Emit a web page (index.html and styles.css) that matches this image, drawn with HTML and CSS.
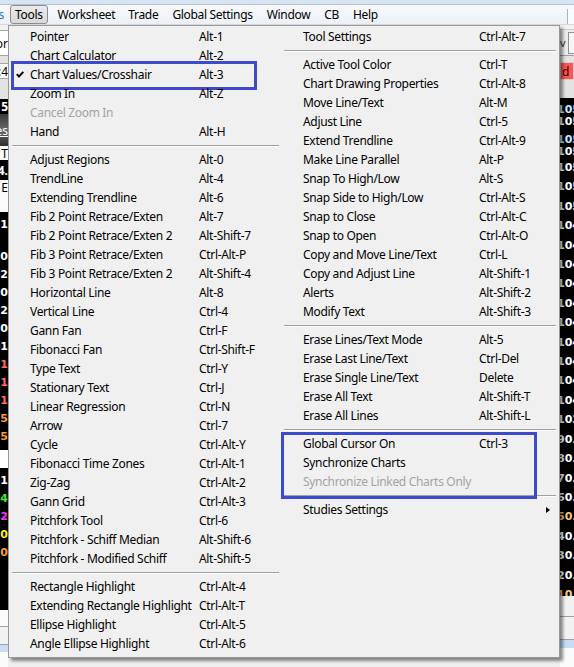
FILE: index.html
```html
<!DOCTYPE html>
<html lang="en">
<head>
<meta charset="utf-8">
<title>Tools menu</title>
<link rel="stylesheet" href="styles.css">
</head>
<body>
<div class="screen">
  <header class="menubar">
    <div class="menubar-top"></div>
    <nav class="menubar-items">
      <span class="mb-cut">s</span>
      <span class="mb-item mb-active">Tools</span>
      <span class="mb-item">Worksheet</span>
      <span class="mb-item">Trade</span>
      <span class="mb-item">Global Settings</span>
      <span class="mb-item">Window</span>
      <span class="mb-item">CB</span>
      <span class="mb-item">Help</span>
      <span class="mb-field"></span>
    </nav>
  </header>

  <div class="workspace">
    <div class="left-strip">
      <div class="ls ls-light h5"></div>
      <div class="ls ls-field h26"><span>Indicator</span></div>
      <div class="ls ls-gray h7"></div>
      <div class="ls ls-field h16"><span>1:4</span></div>
      <div class="ls ls-gray h20"></div>
      <div class="ls ls-black h15 bold"><span>5</span></div>
      <div class="ls ls-dark h32"><span class="ul">Studies</span></div>
      <div class="ls ls-white h14"><span>- T</span></div>
      <div class="ls ls-black h20 bold"><span>4.</span></div>
      <div class="ls ls-white h15"><span>E</span></div>
      <div class="ls ls-white h17"></div>
      <div class="ls ls-black h398 numbers">
        <span class="c-white">#1</span>
        <span class="c-white gap">3.0</span>
        <span class="c-white">.2</span>
        <span class="c-white">1.0</span>
        <span class="c-white">.2</span>
        <span class="c-white">20</span>
        <span class="c-white">01</span>
        <span class="c-red">3.1</span>
        <span class="c-red">3.1</span>
        <span class="c-red">3.1</span>
        <span class="c-orange">25</span>
        <span class="c-orange">75</span>
        <span class="blank"></span>
        <span class="c-white">, 1</span>
        <span class="c-green">4</span>
        <span class="c-magenta">2</span>
        <span class="c-yellow">0</span>
        <span class="c-orange">0</span>
      </div>
      <div class="ls ls-white h17 line"></div>
      <div class="ls ls-light h18 line"></div>
      <div class="ls ls-blue h7"></div>
      <div class="ls ls-white fill"></div>
    </div>

    <div class="center"></div>

    <div class="right-strip">
      <div class="rs rs-light h4"></div>
      <div class="rs rs-toolbar h27"><span class="tb-char">v</span><span class="tb-btn"></span></div>
      <div class="rs rs-gray h6"></div>
      <div class="rs rs-red h18"><span>d</span></div>
      <div class="rs rs-gray h18"></div>
      <div class="rs rs-black h498 prices">
        <span class="p-blue short">105</span>
        <span class="p-white short">105</span>
        <span class="p-blue short spaced">105</span>
        <span class="p-white short">105</span>
        <span class="p-white">105</span>
        <span class="p-white">105</span>
        <span class="p-white">105</span>
        <span class="p-white">104</span>
        <span class="p-white">104</span>
        <span class="p-white">104</span>
        <span class="p-white">104</span>
        <span class="p-white">104</span>
        <span class="p-white">104</span>
        <span class="p-white">104</span>
        <span class="p-white">104</span>
        <span class="p-white">104</span>
        <span class="p-white">104</span>
        <span class="p-white">103</span>
        <span class="p-white">90.</span>
        <span class="p-white">80.</span>
        <span class="p-white">70.</span>
        <span class="p-white">60.</span>
        <span class="p-orange">50.</span>
        <span class="p-white">40.</span>
        <span class="p-white">30.</span>
        <span class="p-white">20.</span>
        <span class="p-orange">10.</span>
      </div>
      <div class="rs rs-light h21 line"></div>
      <div class="rs rs-light h23 line"></div>
      <div class="rs rs-blue h8"></div>
      <div class="rs rs-white fill"></div>
    </div>
  </div>

  <div class="dropdown">
    <div class="col col-left">
      <div class="item"><span class="chk"></span><span class="lbl">Pointer</span><span class="key">Alt-1</span></div>
      <div class="item"><span class="chk"></span><span class="lbl">Chart Calculator</span><span class="key">Alt-2</span></div>
      <div class="item marked"><span class="chk"><svg width="8" height="7" viewBox="0 0 8 7"><path d="M0.8 3.2 L3 5.5 L7.3 0.8" fill="none" stroke="#000" stroke-width="1.9"/></svg></span><span class="lbl">Chart Values/Crosshair</span><span class="key">Alt-3</span></div>
      <div class="item"><span class="chk"></span><span class="lbl">Zoom In</span><span class="key">Alt-Z</span></div>
      <div class="item disabled"><span class="chk"></span><span class="lbl">Cancel Zoom In</span><span class="key"></span></div>
      <div class="item"><span class="chk"></span><span class="lbl">Hand</span><span class="key">Alt-H</span></div>
      <div class="sep"></div>
      <div class="item"><span class="chk"></span><span class="lbl">Adjust Regions</span><span class="key">Alt-0</span></div>
      <div class="item"><span class="chk"></span><span class="lbl">TrendLine</span><span class="key">Alt-4</span></div>
      <div class="item"><span class="chk"></span><span class="lbl">Extending Trendline</span><span class="key">Alt-6</span></div>
      <div class="item"><span class="chk"></span><span class="lbl">Fib 2 Point Retrace/Exten</span><span class="key">Alt-7</span></div>
      <div class="item"><span class="chk"></span><span class="lbl">Fib 2 Point Retrace/Exten 2</span><span class="key">Alt-Shift-7</span></div>
      <div class="item"><span class="chk"></span><span class="lbl">Fib 3 Point Retrace/Exten</span><span class="key">Ctrl-Alt-P</span></div>
      <div class="item"><span class="chk"></span><span class="lbl">Fib 3 Point Retrace/Exten 2</span><span class="key">Alt-Shift-4</span></div>
      <div class="item"><span class="chk"></span><span class="lbl">Horizontal Line</span><span class="key">Alt-8</span></div>
      <div class="item"><span class="chk"></span><span class="lbl">Vertical Line</span><span class="key">Ctrl-4</span></div>
      <div class="item"><span class="chk"></span><span class="lbl">Gann Fan</span><span class="key">Ctrl-F</span></div>
      <div class="item"><span class="chk"></span><span class="lbl">Fibonacci Fan</span><span class="key">Ctrl-Shift-F</span></div>
      <div class="item"><span class="chk"></span><span class="lbl">Type Text</span><span class="key">Ctrl-Y</span></div>
      <div class="item"><span class="chk"></span><span class="lbl">Stationary Text</span><span class="key">Ctrl-J</span></div>
      <div class="item"><span class="chk"></span><span class="lbl">Linear Regression</span><span class="key">Ctrl-N</span></div>
      <div class="item"><span class="chk"></span><span class="lbl">Arrow</span><span class="key">Ctrl-7</span></div>
      <div class="item"><span class="chk"></span><span class="lbl">Cycle</span><span class="key">Ctrl-Alt-Y</span></div>
      <div class="item"><span class="chk"></span><span class="lbl">Fibonacci Time Zones</span><span class="key">Ctrl-Alt-1</span></div>
      <div class="item"><span class="chk"></span><span class="lbl">Zig-Zag</span><span class="key">Ctrl-Alt-2</span></div>
      <div class="item"><span class="chk"></span><span class="lbl">Gann Grid</span><span class="key">Ctrl-Alt-3</span></div>
      <div class="item"><span class="chk"></span><span class="lbl">Pitchfork Tool</span><span class="key">Ctrl-6</span></div>
      <div class="item"><span class="chk"></span><span class="lbl">Pitchfork - Schiff Median</span><span class="key">Alt-Shift-6</span></div>
      <div class="item"><span class="chk"></span><span class="lbl">Pitchfork - Modified Schiff</span><span class="key">Alt-Shift-5</span></div>
      <div class="sep"></div>
      <div class="item"><span class="chk"></span><span class="lbl">Rectangle Highlight</span><span class="key">Ctrl-Alt-4</span></div>
      <div class="item"><span class="chk"></span><span class="lbl">Extending Rectangle Highlight</span><span class="key">Ctrl-Alt-T</span></div>
      <div class="item"><span class="chk"></span><span class="lbl">Ellipse Highlight</span><span class="key">Ctrl-Alt-5</span></div>
      <div class="item"><span class="chk"></span><span class="lbl">Angle Ellipse Highlight</span><span class="key">Ctrl-Alt-6</span></div>
    </div>
    <div class="col col-right">
      <div class="item"><span class="chk"></span><span class="lbl">Tool Settings</span><span class="key">Ctrl-Alt-7</span></div>
      <div class="sep"></div>
      <div class="item"><span class="chk"></span><span class="lbl">Active Tool Color</span><span class="key">Ctrl-T</span></div>
      <div class="item"><span class="chk"></span><span class="lbl">Chart Drawing Properties</span><span class="key">Ctrl-Alt-8</span></div>
      <div class="item"><span class="chk"></span><span class="lbl">Move Line/Text</span><span class="key">Alt-M</span></div>
      <div class="item"><span class="chk"></span><span class="lbl">Adjust Line</span><span class="key">Ctrl-5</span></div>
      <div class="item"><span class="chk"></span><span class="lbl">Extend Trendline</span><span class="key">Ctrl-Alt-9</span></div>
      <div class="item"><span class="chk"></span><span class="lbl">Make Line Parallel</span><span class="key">Alt-P</span></div>
      <div class="item"><span class="chk"></span><span class="lbl">Snap To High/Low</span><span class="key">Alt-S</span></div>
      <div class="item"><span class="chk"></span><span class="lbl">Snap Side to High/Low</span><span class="key">Ctrl-Alt-S</span></div>
      <div class="item"><span class="chk"></span><span class="lbl">Snap to Close</span><span class="key">Ctrl-Alt-C</span></div>
      <div class="item"><span class="chk"></span><span class="lbl">Snap to Open</span><span class="key">Ctrl-Alt-O</span></div>
      <div class="item"><span class="chk"></span><span class="lbl">Copy and Move Line/Text</span><span class="key">Ctrl-L</span></div>
      <div class="item"><span class="chk"></span><span class="lbl">Copy and Adjust Line</span><span class="key">Alt-Shift-1</span></div>
      <div class="item"><span class="chk"></span><span class="lbl">Alerts</span><span class="key">Alt-Shift-2</span></div>
      <div class="item"><span class="chk"></span><span class="lbl">Modify Text</span><span class="key">Alt-Shift-3</span></div>
      <div class="sep"></div>
      <div class="item"><span class="chk"></span><span class="lbl">Erase Lines/Text Mode</span><span class="key">Alt-5</span></div>
      <div class="item"><span class="chk"></span><span class="lbl">Erase Last Line/Text</span><span class="key">Ctrl-Del</span></div>
      <div class="item"><span class="chk"></span><span class="lbl">Erase Single Line/Text</span><span class="key">Delete</span></div>
      <div class="item"><span class="chk"></span><span class="lbl">Erase All Text</span><span class="key">Alt-Shift-T</span></div>
      <div class="item"><span class="chk"></span><span class="lbl">Erase All Lines</span><span class="key">Alt-Shift-L</span></div>
      <div class="sep"></div>
      <div class="group-marked">
        <div class="item"><span class="chk"></span><span class="lbl">Global Cursor On</span><span class="key">Ctrl-3</span></div>
        <div class="item"><span class="chk"></span><span class="lbl">Synchronize Charts</span><span class="key"></span></div>
        <div class="item disabled"><span class="chk"></span><span class="lbl">Synchronize Linked Charts Only</span><span class="key"></span></div>
      </div>
      <div class="sep"></div>
      <div class="item"><span class="chk"></span><span class="lbl">Studies Settings</span><span class="key"><span class="sub-arrow"></span></span></div>
    </div>
  </div>
</div>
</body>
</html>
```

FILE: styles.css
```css
* { box-sizing: border-box; }

html, body {
  margin: 0;
  padding: 0;
}

body {
  width: 574px;
  height: 667px;
  overflow: hidden;
  background: #f0f0f0;
  font-family: "Noto Sans", "Open Sans", sans-serif;
  font-size: 12px;
  letter-spacing: -0.32px;
  color: #000;
}

.screen {
  position: relative;
  width: 574px;
  height: 667px;
  display: flex;
  flex-direction: column;
}

/* ---------- menu bar ---------- */
.menubar {
  height: 25px;
  flex: none;
  display: flex;
  flex-direction: column;
}

.menubar-top {
  height: 6px;
  background: #d7e4f3;
  border-bottom: 1px solid #b8c2cf;
}

.menubar-items {
  flex: 1;
  display: flex;
  align-items: center;
  background: linear-gradient(#f7f9fc, #edf1f6);
  border-bottom: 1px solid #d4d9e0;
  white-space: nowrap;
}

.mb-cut {
  width: 4px;
  overflow: hidden;
  color: #2b6fd6;
  direction: rtl;
  margin-right: 6px;
}

.mb-item {
  padding: 0 7px;
  line-height: 17px;
}

.mb-active {
  border: 1px solid #8a8c8f;
  border-radius: 3px;
  background: linear-gradient(#ebebeb, #d9d9d9);
  padding: 0 4px;
  margin-right: 3px;
}

.mb-item:nth-child(4) { margin-left: -1px; }

.mb-field {
  margin-left: auto;
  width: 7px;
  height: 15px;
  border-left: 1px solid #a9b3bf;
  background: #fafbfc;
  align-self: flex-end;
}

/* ---------- background app ---------- */
.workspace {
  flex: 1;
  display: flex;
  min-height: 0;
}

.left-strip {
  width: 8px;
  display: flex;
  flex-direction: column;
  overflow: hidden;
}

.center {
  flex: 1;
  background: #f0f0f0;
}

.right-strip {
  width: 14px;
  display: flex;
  flex-direction: column;
  overflow: hidden;
}

.ls, .rs {
  flex: none;
  display: flex;
  align-items: center;
  white-space: nowrap;
  font-size: 12px;
  letter-spacing: 0;
}

.ls { justify-content: flex-end; }
.rs { justify-content: flex-start; }

.h4 { height: 4px; }
.h5 { height: 5px; }
.h6 { height: 6px; }
.h7 { height: 7px; }
.h8 { height: 8px; }
.h14 { height: 14px; }
.h15 { height: 15px; }
.h16 { height: 16px; }
.h17 { height: 17px; }
.h18 { height: 18px; }
.h20 { height: 20px; }
.h21 { height: 21px; }
.h23 { height: 23px; }
.h26 { height: 26px; }
.h27 { height: 27px; }
.h32 { height: 32px; }
.h398 { height: 398px; }
.h498 { height: 498px; }
.fill { flex: 1; }

.ls-light, .rs-light { background: #f2f2f2; }
.ls-field { background: #fff; border-top: 1px solid #a5a5a5; border-bottom: 1px solid #a5a5a5; }
.ls-gray, .rs-gray { background: #e3e3e3; }
.ls-black, .rs-black { background: #000; color: #fff; }
.ls-dark { background: linear-gradient(#3a3a3a, #6a6a6a 50%, #2e2e2e); color: #fff; }
.ls-white, .rs-white { background: #fafafa; }
.ls-blue, .rs-blue { background: #c8ddf4; }
.line { border-bottom: 1px solid #9f9f9f; }
.bold { font-weight: 700; }
.ul { text-decoration: underline; }

.numbers {
  flex-direction: column;
  align-items: flex-end;
  justify-content: flex-start;
  font-family: "DejaVu Sans", sans-serif;
  font-weight: 700;
  font-size: 11px;
  line-height: 18px;
  padding-top: 4px;
}
.numbers .gap { margin-top: 14px; }
.numbers .blank { height: 18px; background: #fff; width: 8px; margin: 4px 0; }
.c-white { color: #fff; }
.c-red { color: #ff6a6a; }
.c-orange { color: #ff9a2e; }
.c-green { color: #33ee33; }
.c-magenta { color: #ff33ff; }
.c-yellow { color: #ffee22; }

.rs-toolbar {
  background: #ececec;
  border-top: 1px solid #c9c9c9;
  border-bottom: 1px solid #9d9d9d;
  gap: 2px;
}
.tb-char { color: #333; margin-left: 0; font-size: 11px; }
.tb-btn {
  width: 6px;
  height: 22px;
  border: 1px solid #8f8f8f;
  border-right: none;
  background: #f6f6f6;
}

.rs-red {
  background: #ff5252;
  border: 1px solid #d0d0d0;
  padding-left: 1px;
  color: #300;
}

.prices {
  flex-direction: column;
  align-items: flex-start;
  justify-content: flex-start;
  font-family: "DejaVu Sans", sans-serif;
  font-weight: 700;
  font-size: 11px;
  line-height: 19.4px;
  padding-top: 6px;
  margin-left: -3px;
  overflow: visible;
}
.prices .short { line-height: 12px; }
.prices .spaced { margin-top: 6px; }
.p-white { color: #fff; }
.p-blue { color: #c8e6ff; }
.p-orange { color: #ffc680; }

/* ---------- dropdown menu ---------- */
.dropdown {
  position: absolute;
  left: 8px;
  top: 25px;
  width: 552px;
  height: 633px;
  background: #f0f0f0;
  border: 1px solid #979797;
  box-shadow: 3px 3px 3px rgba(0, 0, 0, 0.45);
  padding: 1px 0 4px;
  display: flex;
  z-index: 2;
}

.col {
  display: flex;
  flex-direction: column;
}

.col-left { width: 272px; }
.col-right { flex: 1; }

.item {
  position: relative;
  display: grid;
  height: 19px;
  line-height: 19px;
  white-space: nowrap;
  align-items: center;
}

.col-left .item { grid-template-columns: 21px 169px 1fr; }
.col-right .item { grid-template-columns: 22px 176px 1fr; }

.chk {
  display: flex;
  justify-content: flex-end;
  padding-right: 6px;
  align-items: center;
}
.chk svg { display: block; }

.disabled { color: #a3a3a3; }

.marked::after {
  content: "";
  position: absolute;
  left: 2px;
  top: -4px;
  width: 240px;
  height: 23px;
  border: 3px solid #3d4bc6;
  pointer-events: none;
}

.group-marked {
  position: relative;
}
.group-marked::after {
  content: "";
  position: absolute;
  left: 0;
  top: -2px;
  width: 250px;
  height: 61px;
  border: 3px solid #3d4bc6;
  pointer-events: none;
}

.sep {
  flex: none;
  height: 2px;
  margin: 4px 2px 3px 3px;
  border-top: 1px solid #a0a0a0;
  border-bottom: 1px solid #ffffff;
}

.col-right .sep { margin: 4px 3px 3px 3px; }

.key {
  display: flex;
  align-items: center;
}

.sub-arrow {
  margin-left: auto;
  margin-right: 9px;
  width: 0;
  height: 0;
  border-top: 3.5px solid transparent;
  border-bottom: 3.5px solid transparent;
  border-left: 4px solid #000;
}
```
